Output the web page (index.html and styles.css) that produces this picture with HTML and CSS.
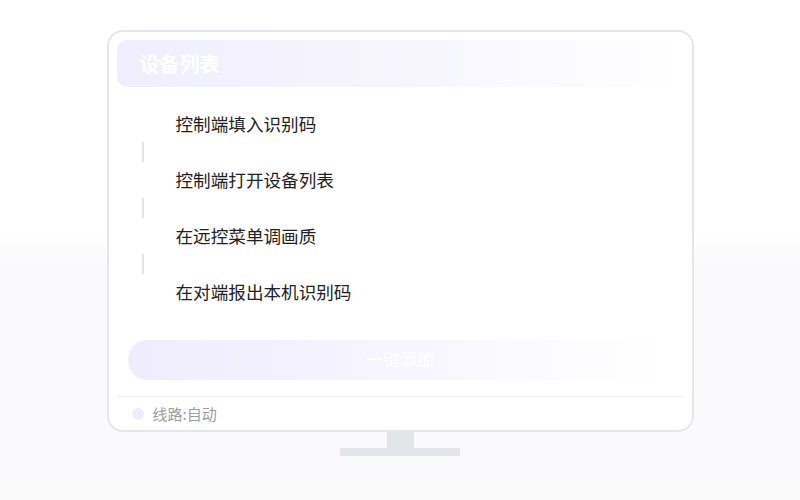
FILE: index.html
```html
<!DOCTYPE html>
<html lang="zh-CN">
  <head>
    <meta charset="UTF-8" />
    <meta name="viewport" content="width=device-width, initial-scale=1.0" />
    <title>设备列表</title>
    <link rel="stylesheet" href="styles.css">
  </head>
  <body>
    <div class="page">
      <div class="monitor">
        <div class="header">
          <h2 class="title">设备列表</h2>
        </div>

        <ul class="steps">
          <li class="step">控制端填入识别码</li>
          <li class="link"></li>
          <li class="step">控制端打开设备列表</li>
          <li class="link"></li>
          <li class="step">在远控菜单调画质</li>
          <li class="link"></li>
          <li class="step">在对端报出本机识别码</li>
        </ul>

        <div class="button">
          <button>一键添加</button>
        </div>

        <div class="footer">
          <span class="dot"></span>
          <span class="route">线路:自动</span>
        </div>
      </div>

      <div class="neck"></div>
      <div class="base"></div>
    </div>
  </body>
</html>
```

FILE: styles.css
```css
body {
  margin: 0;
  padding: 0;
  height: 500px;
  background: linear-gradient(#ffffff 0, #ffffff 46%, #f9f9fb 54%, #fafafb 100%);
  font-family: "Noto Sans CJK SC", "Noto Sans", sans-serif;
}

.page {
  display: flex;
  flex-direction: column;
  align-items: center;
  padding-top: 30px;
}

.monitor {
  width: 587px;
  box-sizing: border-box;
  border: 2px solid #e4e6eb;
  border-radius: 16px;
  background-color: #ffffff;
  padding: 8px 8px 0 8px;
}

.header {
  height: 47px;
  border-radius: 10px;
  background: linear-gradient(90deg, #f0eefd 0%, #f6f5fe 50%, #fdfdff 90%, #ffffff 100%);
  display: flex;
  align-items: center;
  padding-left: 23px;
}

.title {
  margin: 0;
  font-size: 20px;
  font-weight: bold;
  color: #ffffff;
}

.steps {
  list-style: none;
  margin: 19px 0 0 0;
  padding: 0;
}

.step {
  height: 36px;
  line-height: 36px;
  padding-left: 59px;
  font-size: 17.6px;
  color: #222222;
}

.link {
  height: 20px;
  width: 2px;
  margin-left: 25px;
  background-color: #e2e3e8;
}

.button {
  margin: 30px 11px 0 11px;
}

.button button {
  width: 100%;
  height: 40px;
  padding: 0 0 3px 0;
  border: none;
  border-radius: 20px;
  background: linear-gradient(90deg, #efecfd 0%, #f5f3fe 40%, #fbfbff 75%, #ffffff 100%);
  color: #ffffff;
  font-family: inherit;
  font-size: 17px;
  cursor: pointer;
}

.footer {
  margin-top: 16px;
  border-top: 1px solid #eef0f3;
  height: 33px;
  display: flex;
  align-items: center;
  padding-left: 15px;
}

.dot {
  width: 12px;
  height: 12px;
  border-radius: 50%;
  background-color: #efedfc;
  margin-right: 9px;
}

.route {
  font-size: 15px;
  color: #9a9ca3;
}

.neck {
  width: 27px;
  height: 16px;
  background-color: #e2e5e9;
}

.base {
  width: 120px;
  height: 8px;
  background-color: #e2e5e9;
}
```
